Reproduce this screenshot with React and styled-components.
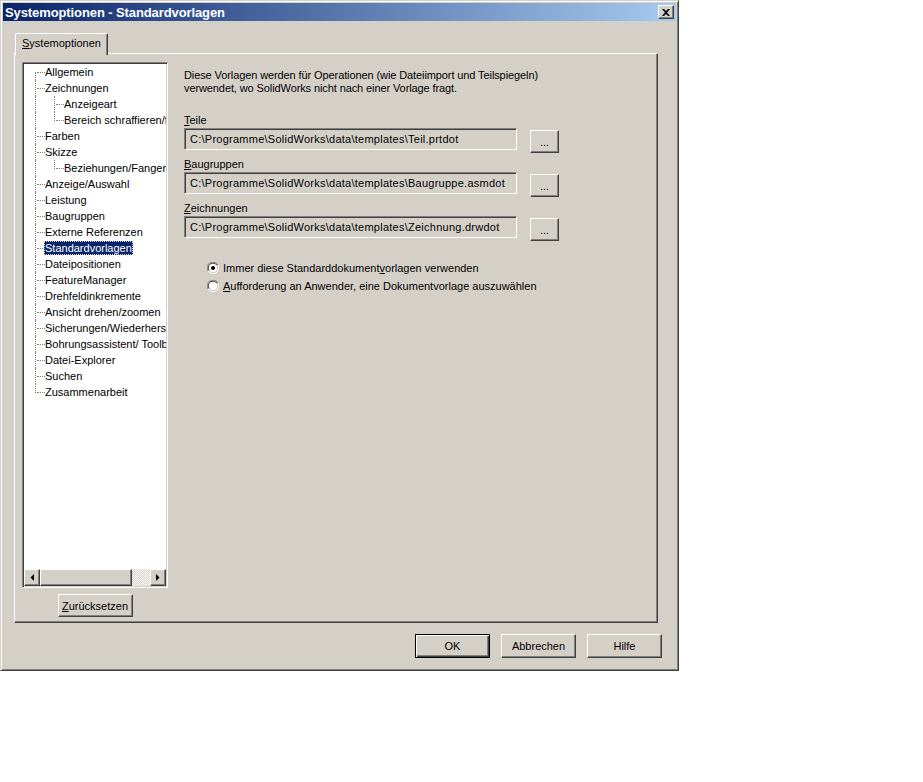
import styled, { createGlobalStyle } from 'styled-components'

const GlobalStyle = createGlobalStyle`
  html, body {
    margin: 0;
    padding: 0;
    background: #ffffff;
  }
  body {
    font-family: "Liberation Sans", Arial, sans-serif;
    font-size: 11px;
    color: #000;
  }
`

const treeItems = [
  { label: 'Allgemein', level: 0 },
  { label: 'Zeichnungen', level: 0 },
  { label: 'Anzeigeart', level: 1 },
  { label: 'Bereich schraffieren/füllen', level: 1, lastChild: true },
  { label: 'Farben', level: 0 },
  { label: 'Skizze', level: 0 },
  { label: 'Beziehungen/Fangen', level: 1, lastChild: true },
  { label: 'Anzeige/Auswahl', level: 0 },
  { label: 'Leistung', level: 0 },
  { label: 'Baugruppen', level: 0 },
  { label: 'Externe Referenzen', level: 0 },
  { label: 'Standardvorlagen', level: 0, selected: true },
  { label: 'Dateipositionen', level: 0 },
  { label: 'FeatureManager', level: 0 },
  { label: 'Drehfeldinkremente', level: 0 },
  { label: 'Ansicht drehen/zoomen', level: 0 },
  { label: 'Sicherungen/Wiederherstellen', level: 0 },
  { label: 'Bohrungsassistent/ Toolbox', level: 0 },
  { label: 'Datei-Explorer', level: 0 },
  { label: 'Suchen', level: 0 },
  { label: 'Zusammenarbeit', level: 0 },
]

const templates = [
  { key: 'T', rest: 'eile', path: 'C:\\Programme\\SolidWorks\\data\\templates\\Teil.prtdot' },
  { key: 'B', rest: 'augruppen', path: 'C:\\Programme\\SolidWorks\\data\\templates\\Baugruppe.asmdot' },
  { key: 'Z', rest: 'eichnungen', path: 'C:\\Programme\\SolidWorks\\data\\templates\\Zeichnung.drwdot' },
]

const RadioIcon = ({ checked }) => (
  <svg width="12" height="12" viewBox="0 0 12 12">
    <path d="M11 3 A5.5 5.5 0 0 0 3 1 A5.5 5.5 0 0 0 1 9" fill="none" stroke="#808080" strokeWidth="1" />
    <path d="M10 3.5 A4.5 4.5 0 0 0 3.5 2 A4.5 4.5 0 0 0 2 8.5" fill="none" stroke="#404040" strokeWidth="1" />
    <circle cx="6" cy="6" r="4" fill="#fff" />
    <path d="M1 9 A5.5 5.5 0 0 0 11 3" fill="none" stroke="#fff" strokeWidth="1" />
    {checked && <circle cx="6" cy="6" r="2" fill="#000" />}
  </svg>
)

const App = () => {
  return (
    <>
      <GlobalStyle />
      <Window>
        <TitleBar>
          <TitleText>Systemoptionen - Standardvorlagen</TitleText>
          <CloseButton>
            <svg width="8" height="7" viewBox="0 0 8 7">
              <path d="M0 0 L2 0 L4 2 L6 0 L8 0 L5 3.5 L8 7 L6 7 L4 5 L2 7 L0 7 L3 3.5 Z" fill="#000" />
            </svg>
          </CloseButton>
        </TitleBar>

        <DialogBody>
          <TabStrip>
            <Tab>
              <u>S</u>ystemoptionen
            </Tab>
          </TabStrip>

          <Panel>
            <LeftColumn>
              <TreeBox>
                <TreeList>
                  {treeItems.map((item, i) => (
                    <TreeRow key={item.label}>
                      {item.level === 1 && <Rail />}
                      <Elbow $first={i === 0} $last={i === treeItems.length - 1 || item.lastChild} />
                      <TreeLabel $selected={item.selected}>{item.label}</TreeLabel>
                    </TreeRow>
                  ))}
                </TreeList>
                <HScrollBar>
                  <ScrollArrow>
                    <svg width="4" height="7" viewBox="0 0 4 7">
                      <path d="M4 0 L4 7 L0.5 3.5 Z" fill="#000" />
                    </svg>
                  </ScrollArrow>
                  <ScrollThumb />
                  <ScrollTrack />
                  <ScrollArrow>
                    <svg width="4" height="7" viewBox="0 0 4 7">
                      <path d="M0 0 L0 7 L3.5 3.5 Z" fill="#000" />
                    </svg>
                  </ScrollArrow>
                </HScrollBar>
              </TreeBox>
              <ResetButton>
                <u>Z</u>urücksetzen
              </ResetButton>
            </LeftColumn>

            <RightColumn>
              <Description>
                Diese Vorlagen werden für Operationen (wie Dateiimport und Teilspiegeln)
                <br />
                verwendet, wo SolidWorks nicht nach einer Vorlage fragt.
              </Description>

              <TemplateList>
                {templates.map((t) => (
                  <TemplateGroup key={t.path}>
                    <FieldLabel>
                      <u>{t.key}</u>
                      {t.rest}
                    </FieldLabel>
                    <FieldRow>
                      <PathField>{t.path}</PathField>
                      <BrowseButton>...</BrowseButton>
                    </FieldRow>
                  </TemplateGroup>
                ))}
              </TemplateList>

              <RadioGroup>
                <RadioRow>
                  <RadioIcon checked />
                  <span>
                    Immer diese Standarddokument<u>v</u>orlagen verwenden
                  </span>
                </RadioRow>
                <RadioRow>
                  <RadioIcon />
                  <span>
                    <u>A</u>ufforderung an Anwender, eine Dokumentvorlage auszuwählen
                  </span>
                </RadioRow>
              </RadioGroup>
            </RightColumn>
          </Panel>

          <Footer>
            <DialogButton $default>OK</DialogButton>
            <DialogButton>Abbrechen</DialogButton>
            <DialogButton>Hilfe</DialogButton>
          </Footer>
        </DialogBody>
      </Window>
    </>
  )
}

export default App

const raised = `
  border: 1px solid;
  border-color: #ffffff #404040 #404040 #ffffff;
  box-shadow: inset -1px -1px #808080, inset 1px 1px #d4d0c8;
`

const Window = styled.div`
  box-sizing: border-box;
  width: 679px;
  height: 671px;
  background: #d4d0c8;
  border: 1px solid;
  border-color: #d4d0c8 #404040 #404040 #d4d0c8;
  box-shadow: inset 1px 1px #ffffff, inset -1px -1px #808080;
  padding: 2px;
  display: flex;
  flex-direction: column;
`

const TitleBar = styled.div`
  height: 18px;
  display: flex;
  align-items: center;
  justify-content: space-between;
  padding: 0 2px 0 2px;
  background: linear-gradient(to right, #0a246a, #a6caf0);
`

const TitleText = styled.span`
  color: #ffffff;
  font-family: "Liberation Sans", Arial, sans-serif;
  font-weight: bold;
  font-size: 13px;
  letter-spacing: -0.1px;
`

const CloseButton = styled.div`
  box-sizing: border-box;
  width: 16px;
  height: 14px;
  background: #d4d0c8;
  ${raised}
  display: flex;
  align-items: center;
  justify-content: center;
`

const DialogBody = styled.div`
  flex: 1;
  display: flex;
  flex-direction: column;
  padding: 12px 0 0 11px;
`

const TabStrip = styled.div`
  display: flex;
  height: 20px;
  padding-left: 1px;
  position: relative;
  z-index: 1;
`

const Tab = styled.div`
  box-sizing: border-box;
  width: 93px;
  height: 22px;
  padding-top: 3px;
  padding-left: 6px;
  background: #d4d0c8;
  border-top: 1px solid #ffffff;
  border-left: 1px solid #ffffff;
  border-right: 1px solid #404040;
  box-shadow: inset -1px 0 #808080;
  border-radius: 2px 2px 0 0;
`

const Panel = styled.div`
  box-sizing: border-box;
  width: 644px;
  height: 570px;
  display: flex;
  padding: 8px 0 0 7px;
  border: 1px solid;
  border-color: #ffffff #404040 #404040 #ffffff;
  box-shadow: inset -1px -1px #808080;
`

const LeftColumn = styled.div`
  width: 146px;
  display: flex;
  flex-direction: column;
  align-items: center;
  gap: 6px;
`

const TreeBox = styled.div`
  box-sizing: border-box;
  width: 146px;
  height: 526px;
  background: #ffffff;
  border: 1px solid;
  border-color: #808080 #ffffff #ffffff #808080;
  box-shadow: inset 1px 1px #404040, inset -1px -1px #d4d0c8;
  padding: 1px;
  display: flex;
  flex-direction: column;
`

const TreeList = styled.div`
  flex: 1;
  overflow: hidden;
`

const TreeRow = styled.div`
  height: 16px;
  display: flex;
  align-items: center;
  white-space: nowrap;
  padding-left: 11px;
`

const Rail = styled.span`
  align-self: stretch;
  width: 18px;
  flex: none;
  border-left: 1px dotted #808080;
`

const Elbow = styled.span`
  position: relative;
  align-self: stretch;
  width: 9px;
  flex: none;
  &::before {
    content: '';
    position: absolute;
    left: 0;
    top: ${(p) => (p.$first ? '8px' : '0')};
    height: ${(p) => (p.$first ? '8px' : p.$last ? '9px' : '16px')};
    border-left: 1px dotted #808080;
  }
  &::after {
    content: '';
    position: absolute;
    left: 2px;
    top: 8px;
    width: 8px;
    border-top: 1px dotted #808080;
  }
`

const TreeLabel = styled.span`
  padding: 1px;
  line-height: 12px;
  background: ${(p) => (p.$selected ? '#0a246a' : 'transparent')};
  color: ${(p) => (p.$selected ? '#ffffff' : '#000000')};
  outline: ${(p) => (p.$selected ? '1px dotted #d4d0c8' : 'none')};
  outline-offset: -1px;
`

const HScrollBar = styled.div`
  height: 17px;
  display: flex;
  flex: none;
`

const ScrollArrow = styled.div`
  box-sizing: border-box;
  width: 16px;
  height: 17px;
  background: #d4d0c8;
  ${raised}
  display: flex;
  align-items: center;
  justify-content: center;
`

const ScrollThumb = styled.div`
  box-sizing: border-box;
  width: 92px;
  height: 17px;
  background: #d4d0c8;
  ${raised}
`

const ScrollTrack = styled.div`
  flex: 1;
  background: repeating-conic-gradient(#ffffff 0 25%, #d4d0c8 0 50%) 0 0 / 2px 2px;
`

const Button = styled.button`
  box-sizing: border-box;
  background: #d4d0c8;
  font-family: "Liberation Sans", Arial, sans-serif;
  font-size: 11px;
  color: #000;
  padding: 0;
  ${raised}
`

const ResetButton = styled(Button)`
  width: 75px;
  height: 23px;
`

const RightColumn = styled.div`
  margin-left: 16px;
  display: flex;
  flex-direction: column;
  padding-top: 7px;
`

const Description = styled.p`
  margin: 0;
  line-height: 13px;
  letter-spacing: -0.1px;
`

const TemplateList = styled.div`
  display: flex;
  flex-direction: column;
  gap: 8px;
  margin-top: 19px;
`

const TemplateGroup = styled.div`
  display: flex;
  flex-direction: column;
`

const FieldLabel = styled.div`
  height: 14px;
  line-height: 13px;
`

const FieldRow = styled.div`
  display: flex;
  align-items: flex-start;
  gap: 13px;
  height: 22px;
`

const PathField = styled.div`
  box-sizing: border-box;
  width: 333px;
  height: 22px;
  border: 1px solid;
  border-color: #808080 #ffffff #ffffff #808080;
  box-shadow: inset 1px 1px #404040, inset -1px -1px #d4d0c8;
  padding: 4px 0 0 5px;
  white-space: nowrap;
  overflow: hidden;
  letter-spacing: 0.25px;
`

const BrowseButton = styled(Button)`
  width: 29px;
  height: 23px;
  margin-top: 2px;
  line-height: 18px;
`

const RadioGroup = styled.div`
  display: flex;
  flex-direction: column;
  gap: 5px;
  margin-top: 23px;
  padding-left: 23px;
`

const RadioRow = styled.label`
  display: flex;
  align-items: center;
  gap: 4px;
  height: 13px;
`

const Footer = styled.div`
  display: flex;
  justify-content: flex-end;
  gap: 11px;
  padding: 11px 14px 0 0;
`

const DialogButton = styled(Button)`
  width: 75px;
  height: 24px;
  ${(p) =>
    p.$default &&
    `
    outline: 1px solid #000;
    outline-offset: -1px;
    border-color: #000;
    box-shadow: inset 1px 1px #ffffff, inset -1px -1px #404040, inset -2px -2px #808080;
  `}
`
